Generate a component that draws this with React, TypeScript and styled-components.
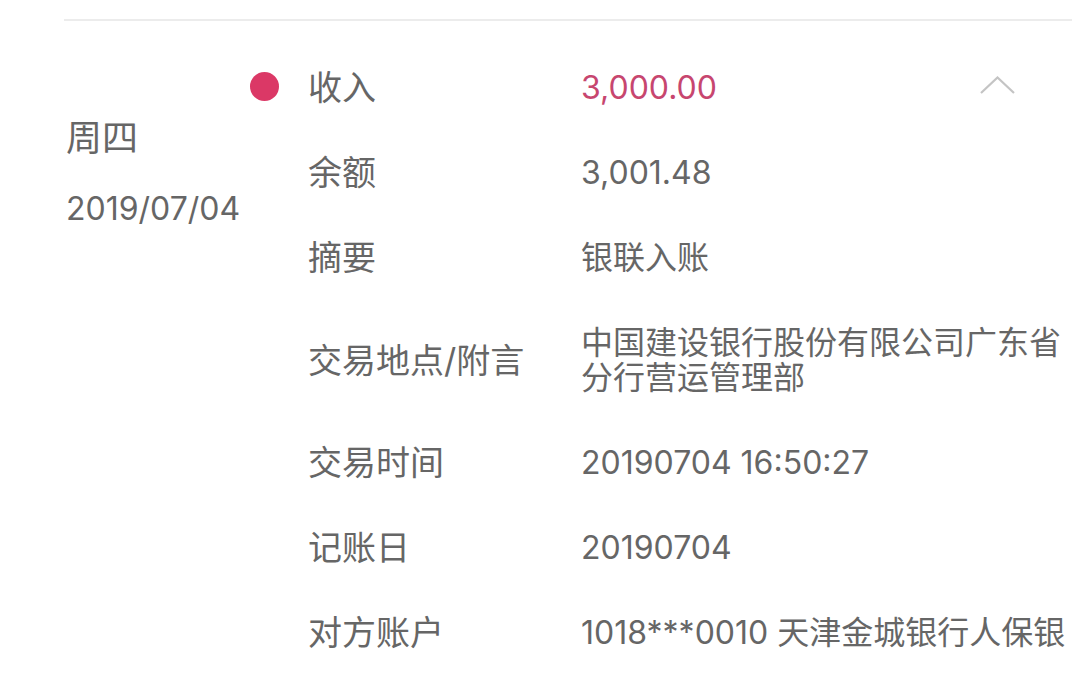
import React from "react"
import styled, { createGlobalStyle } from "styled-components";

const GlobalStyle = createGlobalStyle`
    html, body {
        margin: 0;
        padding: 0;
        background: #ffffff;
    }
    body {
        font-family: Inter, "Noto Sans CJK SC", sans-serif;
        color: #666666;
        -webkit-font-smoothing: antialiased;
    }
`;

const Page = styled.div`
    width: 1072px;
    height: 685px;
    overflow: hidden;
    padding: 19px 0 0 64px;
    box-sizing: border-box;
`;

const Divider = styled.div`
    height: 2px;
    background: #ececec;
`;

const Record = styled.div`
    display: flex;
    padding-top: 24px;
`;

const DayColumn = styled.div`
    width: 186px;
    padding: 73px 0 0 2px;
    box-sizing: border-box;
    flex-shrink: 0;
`;

const WeekDay = styled.div`
    font-size: 36px;
    line-height: 40px;
    color: #666666;
`;

const DateText = styled.div`
    margin-top: 31px;
    font-size: 32px;
    line-height: 40px;
    color: #666666;
`;

const MarkColumn = styled.div`
    width: 58px;
    flex-shrink: 0;
    padding-top: 27px;
    box-sizing: border-box;
`;

const Dot = styled.div`
    width: 29px;
    height: 29px;
    border-radius: 50%;
    background: #db3866;
`;

const Details = styled.div`
    flex: 1;
    min-width: 0;
`;

const Row = styled.div`
    display: flex;
    align-items: center;
    padding: 25px 0;
`;

const Label = styled.div`
    width: 273px;
    flex-shrink: 0;
    font-size: 34px;
    line-height: 35px;
    color: #666666;
`;

const Value = styled.div<{ $accent?: boolean; $nowrap?: boolean }>`
    flex: 1;
    min-width: 0;
    font-size: 32px;
    line-height: 35px;
    color: ${p => p.$accent ? "#c7466f" : "#666666"};
    white-space: ${p => p.$nowrap ? "nowrap" : "normal"};
`;

const Toggle = styled.div`
    width: 35px;
    height: 18px;
    margin-right: 57px;
    margin-top: -5px;
    flex-shrink: 0;
    display: flex;
`;

const ChevronUp = () => (
    <svg width="35" height="18" viewBox="0 0 35 18" fill="none">
        <polyline points="1,17 17.5,1.5 34,17" stroke="#c4c4c4" strokeWidth="2.2" />
    </svg>
)

const rows = [
    { label: "余额", value: "3,001.48" },
    { label: "摘要", value: "银联入账" },
    { label: "交易地点/附言", value: "中国建设银行股份有限公司广东省分行营运管理部" },
    { label: "交易时间", value: "20190704 16:50:27" },
    { label: "记账日", value: "20190704" },
    { label: "对方账户", value: "1018***0010 天津金城银行人保银", nowrap: true },
]

export default function App() {
    return (
        <>
            <GlobalStyle />
            <Page>
                <Divider />
                <Record>
                    <DayColumn>
                        <WeekDay>周四</WeekDay>
                        <DateText>2019/07/04</DateText>
                    </DayColumn>
                    <MarkColumn>
                        <Dot />
                    </MarkColumn>
                    <Details>
                        <Row>
                            <Label>收入</Label>
                            <Value $accent>3,000.00</Value>
                            <Toggle><ChevronUp /></Toggle>
                        </Row>
                        { rows.map(r => (
                            <Row key={ r.label }>
                                <Label>{ r.label }</Label>
                                <Value $nowrap={ r.nowrap }>{ r.value }</Value>
                            </Row>
                        )) }
                    </Details>
                </Record>
            </Page>
        </>
    )
}
